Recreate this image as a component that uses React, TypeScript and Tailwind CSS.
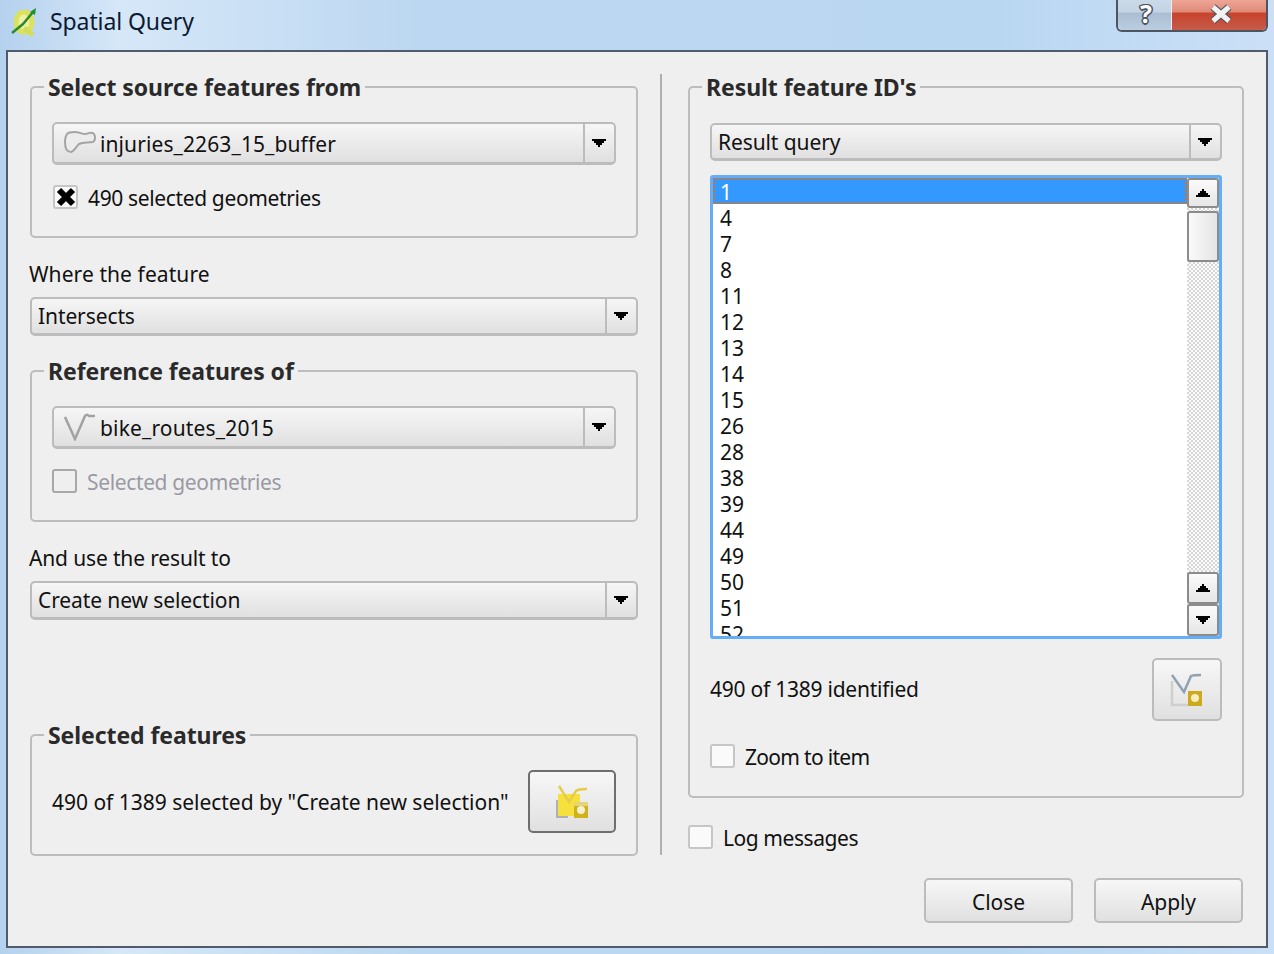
import React from 'react';

const FONT = "font-['Noto_Sans',sans-serif]";

const Arrow = ({ up = false }: { up?: boolean }) => (
  <svg width="16" height="10" viewBox="0 0 16 10" className={up ? 'rotate-180' : ''}>
    <path d="M1 1h14v2h-2v2h-2v2h-2v2H7V7H5V5H3V3H1z" fill="#000" />
  </svg>
);

const PolygonIcon = () => (
  <svg width="34" height="26" viewBox="0 0 34 26" className="shrink-0">
    <path
      d="M3 6C4 2 8 2 12 2C16 2 19 4 22 4C25 4 28 1 31 4C33 7 32 11 30 12C25 13 20 12 16 14C13 17 11 21 8 22C4 22 2 18 2 12C2 9 2 8 3 6z"
      fill="#ececec"
      stroke="#a4a4a4"
      strokeWidth="2"
    />
  </svg>
);

const LineIcon = () => (
  <svg width="34" height="28" viewBox="0 0 34 28" className="shrink-0">
    <path d="M2 4l10 22L22 3c2-2 3-1 4 0h6" fill="none" stroke="#a2a2a2" strokeWidth="2.5" />
  </svg>
);

const QgisIcon = () => (
  <svg width="26" height="30" viewBox="0 0 26 30" className="shrink-0">
    <ellipse cx="13" cy="15" rx="8" ry="10" fill="#eef0a8" stroke="#dbe25f" strokeWidth="5" />
    <path d="M13 21l9 7" stroke="#d5dc5c" strokeWidth="5" />
    <path d="M1 26l11-9L22 5" stroke="#2f8a2c" strokeWidth="2.5" fill="none" />
    <path d="M19 5l6-4-1 7z" fill="#1f8f2c" />
  </svg>
);

const SelectIcon = ({ active }: { active: boolean }) => (
  <svg width="34" height="34" viewBox="0 0 34 34">
    {active ? (
      <>
        <path d="M1 15h3v17h-3zM1 30h12v3H1z" fill="#b0b0b0" />
        <path d="M3 9h22v22H3z" fill="#f6e03e" />
        <path d="M4 1l10 16L21 6c2-2 6-2 11-2" fill="none" stroke="#e5cd45" strokeWidth="2.5" />
        <path d="M19 17h14v16H19z" fill="#cfb21c" />
        <path d="M19 17h14v4H19z" fill="#e3d57a" />
        <circle cx="26" cy="25" r="4" fill="#f5f0d0" />
      </>
    ) : (
      <>
        <path d="M2 8v24h16" fill="none" stroke="#cfcfcf" strokeWidth="2.5" />
        <path d="M2 2l12 17L21 3c2-1 5-1 10-1" fill="none" stroke="#8ea2b2" strokeWidth="2.5" />
        <path d="M18 18h14v15H18z" fill="#cda91c" />
        <circle cx="25" cy="25" r="4" fill="#f7efc2" />
      </>
    )}
  </svg>
);

const Combo = ({
  text,
  icon,
  height,
  textClass = '',
  lift,
}: {
  text: string;
  icon?: React.ReactNode;
  height: string;
  textClass?: string;
  lift?: boolean;
}) => (
  <div className={`flex items-stretch rounded-[5px] border-2 border-b-[3px] border-[#bcbcbc] bg-gradient-to-b from-[#f6f6f6] to-[#e0e0e0] ${height}`}>
    <div className={`flex min-w-0 flex-1 items-center ${lift ? 'pb-px' : ''} ${icon ? 'pl-[9px]' : 'pl-[6px]'}`}>
      {icon}
      <span className={`${icon ? 'ml-[3px] pt-[2px]' : ''} ${textClass}`}>{text}</span>
    </div>
    <div className="flex w-[31px] items-center justify-center border-l-2 border-[#bcbcbc] pr-[2px]">
      <Arrow />
    </div>
  </div>
);

const Check = ({
  checked,
  disabled,
  label,
  textClass = '',
}: {
  checked?: boolean;
  disabled?: boolean;
  label: string;
  textClass?: string;
}) => (
  <div className="flex h-[24px] items-center">
    <div className={`flex h-[24px] w-[25px] shrink-0 items-center justify-center rounded-[3px] border-2 ${disabled ? 'border-[#a8a8a8] bg-[#efefef]' : 'border-[#c6c6c6] bg-[#fafafa]'}`}>
      {checked && (
        <svg width="20" height="20" viewBox="0 0 20 20">
          <path d="M3 3l14 14M17 3L3 17" stroke="#000" strokeWidth="6" />
        </svg>
      )}
    </div>
    <span className={`ml-[10px] pt-[2px] ${disabled ? 'text-[#9a9aa4]' : ''} ${textClass}`}>{label}</span>
  </div>
);

const Group = ({ title, className, children }: { title: string; className: string; children: React.ReactNode }) => (
  <fieldset className={`rounded-[5px] border-2 border-[#bdbdbd] ${className}`}>
    <legend className="ml-[-8px] h-[28px] px-[4px] text-[23px] font-bold leading-[28px] tracking-[-0.07px] text-[#2a2a2a]">{title}</legend>
    {children}
  </fieldset>
);

const Btn = ({ children, className }: { children: React.ReactNode; className: string }) => (
  <div className={`flex items-center justify-center rounded-[5px] border-2 bg-gradient-to-b from-[#f7f7f7] to-[#e0e0e0] ${className}`}>
    {children}
  </div>
);

const ids = ['4', '7', '8', '11', '12', '13', '14', '15', '26', '28', '38', '39', '44', '49', '50', '51', '52'];

const ScrollBtn = ({ up, className }: { up?: boolean; className: string }) => (
  <div className={`flex items-center justify-center rounded-[3px] border-2 border-[#8c8c8c] bg-gradient-to-b from-[#fafafa] to-[#e6e6e6] ${className}`}>
    <Arrow up={up} />
  </div>
);

export default function App() {
  return (
    <div className={`flex h-[954px] w-[1274px] flex-col overflow-hidden bg-[linear-gradient(90deg,#b4d1ee_0,#d6e7f8_120px,#bcd7f1_420px,#bad7f2_1000px,#cbe0f7_1274px)] text-[21px] leading-[26px] tracking-[-0.1px] text-[#111] ${FONT}`}>
      {/* Title bar */}
      <div className="flex h-[50px] shrink-0 items-start pl-[11px] pr-[6px]">
        <div className="mt-[7px]">
          <QgisIcon />
        </div>
        <span className="ml-[13px] mt-[8px] text-[23px] tracking-[-0.1px] text-[#0b1a33]">Spatial Query</span>
        <div className="ml-auto flex h-[32px] overflow-hidden rounded-b-[6px] border-x-2 border-b-2 border-[#4d5560]">
          <div className="flex w-[54px] items-center justify-center border-r border-[#e8eef5] bg-[linear-gradient(180deg,#cbdae8_0,#c4d4e4_12px,#a9bdd2_13px,#bccde0_30px)] pb-[4px] pl-[3px] text-[25px] font-bold leading-[24px] text-white [text-shadow:1.5px_0_#4d5560,-1.5px_0_#4d5560,0_1.5px_#4d5560,0_-1.5px_#4d5560,1px_1px_#4d5560,-1px_-1px_#4d5560,1px_-1px_#4d5560,-1px_1px_#4d5560]">
            ?
          </div>
          <div className="flex w-[94px] items-center justify-center bg-[linear-gradient(180deg,#eda596_0,#e08a78_12px,#c8432c_13px,#c65b4a_30px)] pb-[3px] pl-[3px]">
            <svg width="26" height="20" viewBox="0 0 26 20">
              <path d="M5 3l16 14M21 3L5 17" stroke="#4d5560" strokeWidth="7.5" />
              <path d="M5 3l16 14M21 3L5 17" stroke="#f2f2f2" strokeWidth="5" />
            </svg>
          </div>
        </div>
      </div>

      {/* Window */}
      <div className="mx-[6px] flex h-[898px] shrink-0 border-2 border-[#505c6c] bg-[#efefef]">
        {/* Left column */}
        <div className="ml-[22px] mt-[21px] flex w-[608px] shrink-0 flex-col">
          <Group title="Select source features from" className="h-[165px] px-[20px] pt-[21px]">
            <Combo text="injuries_2263_15_buffer" icon={<PolygonIcon />} height="h-[43px]" textClass="tracking-[0.1px]" />
            <div className="ml-px mt-[20px]">
              <Check checked label="490 selected geometries" textClass="tracking-[-0.36px]" />
            </div>
          </Group>
          <div className="-ml-px mt-[23px] flex h-[26px] items-center tracking-[0.08px]">Where the feature</div>
          <div className="mt-[10px]">
            <Combo text="Intersects" height="h-[39px]" lift />
          </div>
          <Group title="Reference features of" className="mt-[21px] h-[165px] px-[20px] pt-[21px]">
            <Combo text="bike_routes_2015" icon={<LineIcon />} height="h-[43px]" textClass="tracking-[0.15px]" />
            <div className="mt-[20px]">
              <Check disabled label="Selected geometries" textClass="tracking-[-0.36px]" />
            </div>
          </Group>
          <div className="-ml-px mt-[23px] flex h-[26px] items-center tracking-[-0.15px]">And use the result to</div>
          <div className="mt-[10px]">
            <Combo text="Create new selection" height="h-[39px]" lift />
          </div>
          <Group title="Selected features" className="mt-[101px] h-[135px] px-[20px]">
            <div className="mt-[21px] flex items-center justify-between">
              <span className="whitespace-nowrap tracking-[-0.02px]">490 of 1389 selected by "Create new selection"</span>
              <Btn className="h-[63px] w-[88px] border-[#6e6e6e]">
                <SelectIcon active />
              </Btn>
            </div>
          </Group>
        </div>

        {/* Divider */}
        <div className="ml-[22px] mt-[22px] h-[781px] w-[2px] shrink-0 bg-[#b0b0b0]" />

        {/* Right column */}
        <div className="ml-[26px] mt-[21px] flex w-[556px] shrink-0 flex-col">
          <Group title="Result feature ID's" className="h-[725px] px-[20px] pt-[22px]">
            <Combo text="Result query" height="h-[38px]" />
            <div className="mt-[14px] flex h-[464px] overflow-hidden rounded-[3px] border-[3px] border-[#64adf8] bg-white">
              <div className="min-w-0 flex-1 overflow-hidden leading-[22px]">
                <div className="flex h-[26px] items-center bg-[#3399ff] pl-[7px] pt-[2px] text-white outline-2 -outline-offset-2 outline-dotted outline-[#d8701a]">1</div>
                {ids.map((id) => (
                  <div key={id} className="flex h-[26px] items-center pl-[7px] pt-[2px]">{id}</div>
                ))}
              </div>
              <div className="flex w-[32px] shrink-0 flex-col bg-[repeating-conic-gradient(#d6d6d6_0_25%,#fbfbfb_0_50%)] bg-[length:4px_4px]">
                <ScrollBtn up className="h-[30px]" />
                <div className="mt-[3px] h-[51px] rounded-[3px] border-2 border-[#8c8c8c] bg-gradient-to-r from-[#fafafa] to-[#e4e4e4]" />
                <div className="flex-1" />
                <ScrollBtn up className="h-[32px]" />
                <ScrollBtn className="h-[32px]" />
              </div>
            </div>
            <div className="mt-[19px] flex items-center justify-between">
              <span className="pb-[2px] tracking-[-0.24px]">490 of 1389 identified</span>
              <Btn className="h-[63px] w-[70px] border-[#bcbcbc]">
                <SelectIcon active={false} />
              </Btn>
            </div>
            <div className="mt-[23px]">
              <Check label="Zoom to item" textClass="tracking-[-0.7px]" />
            </div>
          </Group>
          <div className="mt-[27px]">
            <Check label="Log messages" textClass="tracking-[-0.43px]" />
          </div>
          <div className="mr-px mt-[29px] flex justify-end gap-[21px]">
            <Btn className="h-[45px] w-[149px] border-[#bcbcbc] pt-[2px]">Close</Btn>
            <Btn className="h-[45px] w-[149px] border-[#bcbcbc] pt-[2px]">Apply</Btn>
          </div>
        </div>
      </div>
    </div>
  );
}
